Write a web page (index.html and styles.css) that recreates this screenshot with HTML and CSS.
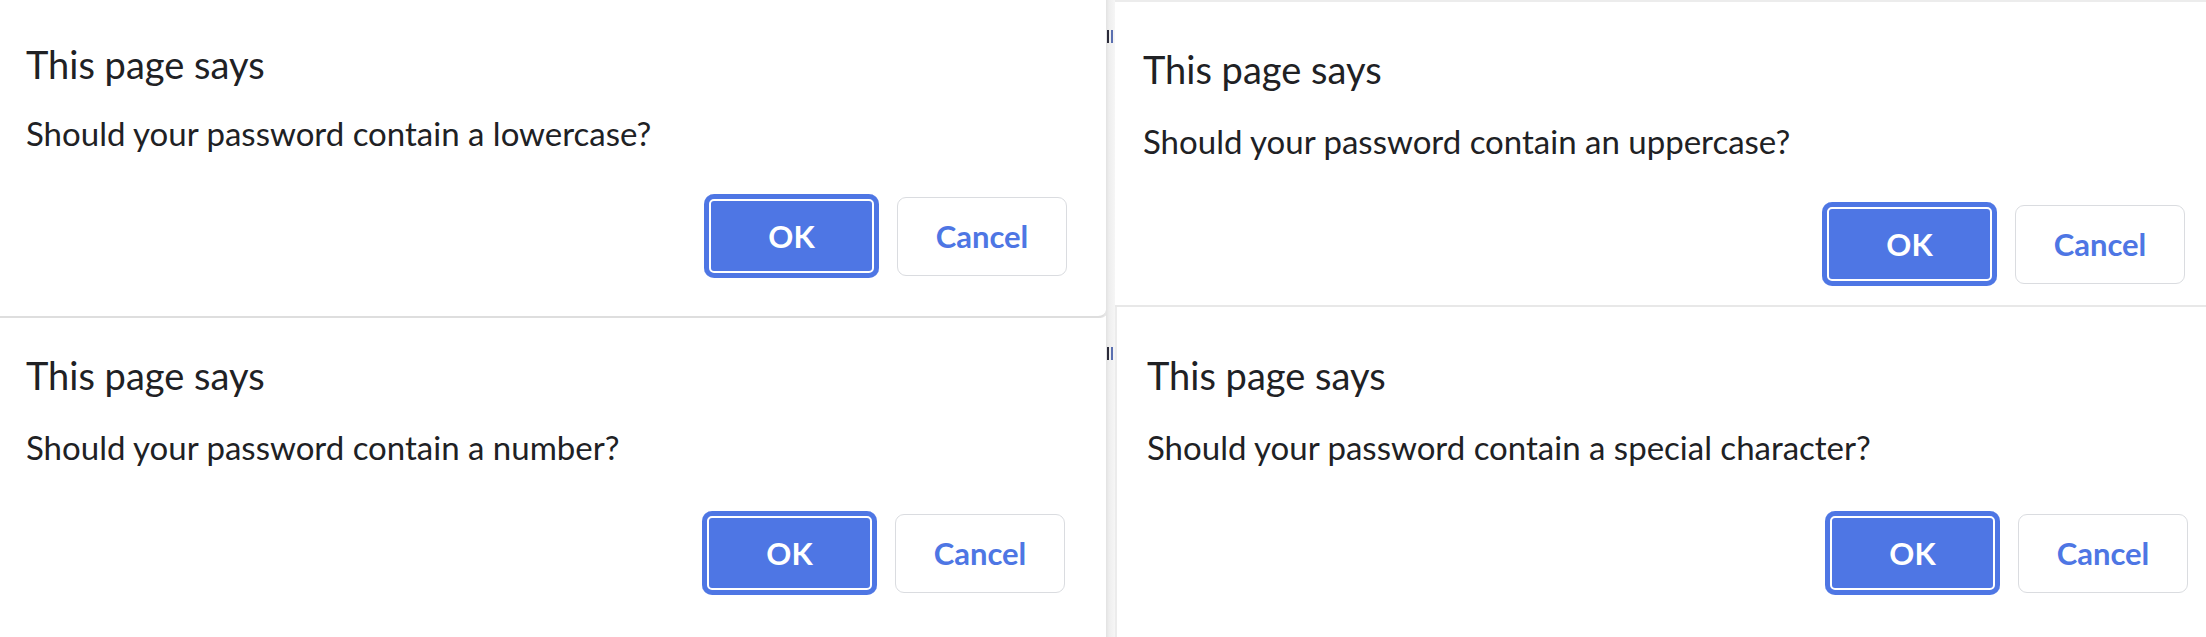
FILE: index.html
```html
<!DOCTYPE html>
<html lang="en">
<head>
<meta charset="utf-8">
<title>Password prompts</title>
<link rel="stylesheet" href="styles.css">
</head>
<body>
<div class="screen">
  <div class="col col-left">
    <section class="dialog d-tl">
      <h2 class="title">This page says</h2>
      <p class="msg">Should your password contain a lowercase?</p>
      <div class="actions">
        <button class="btn btn-ok">OK</button>
        <button class="btn btn-cancel">Cancel</button>
      </div>
    </section>
    <section class="dialog d-bl">
      <h2 class="title">This page says</h2>
      <p class="msg">Should your password contain a number?</p>
      <div class="actions">
        <button class="btn btn-ok">OK</button>
        <button class="btn btn-cancel">Cancel</button>
      </div>
    </section>
  </div>
  <div class="gap">
    <span class="frag frag-top"></span>
    <span class="frag frag-bottom"></span>
  </div>
  <div class="col col-right">
    <section class="dialog d-tr">
      <h2 class="title">This page says</h2>
      <p class="msg">Should your password contain an uppercase?</p>
      <div class="actions">
        <button class="btn btn-ok">OK</button>
        <button class="btn btn-cancel">Cancel</button>
      </div>
    </section>
    <section class="dialog d-br">
      <h2 class="title">This page says</h2>
      <p class="msg">Should your password contain a special character?</p>
      <div class="actions">
        <button class="btn btn-ok">OK</button>
        <button class="btn btn-cancel">Cancel</button>
      </div>
    </section>
  </div>
</div>
</body>
</html>
```
FILE: styles.css
```css
* { box-sizing: border-box; }
html, body {
  margin: 0;
  padding: 0;
  background: #ffffff;
  width: 2206px;
  height: 637px;
  overflow: hidden;
}
body {
  font-family: "Lato", "Noto Sans", sans-serif;
  color: #202124;
}
.screen {
  display: flex;
  width: 2206px;
  height: 637px;
}
.col {
  display: flex;
  flex-direction: column;
}
.col-left { width: 1106px; }
.col-right { width: 1091px; }

.gap {
  width: 9px;
  overflow: hidden;
  display: flex;
  flex-direction: column;
  background: linear-gradient(to right, #e2e2e2 0, #eeeeee 3px, #f6f6f6 9px);
}
/* clipped glyph remnants of the page behind the dialogs */
.frag {
  display: block;
  width: 6px;
  height: 13px;
  margin-left: 1px;
  border-left: 2px solid #2b2b3a;
  border-right: 2px solid #5a6fb0;
}
.frag-top { margin-top: 30px; }
.frag-bottom { margin-top: 304px; }

.dialog {
  background: #ffffff;
  display: flex;
  flex-direction: column;
}
.title {
  margin: 0;
  font-size: 38px;
  line-height: 45px;
  font-weight: 400;
  color: #202124;
}
.msg {
  margin: 0;
  font-size: 33px;
  line-height: 39px;
  color: #202124;
}
.actions {
  display: flex;
  justify-content: flex-end;
  align-items: center;
  gap: 18px;
}
.btn {
  font-family: "Lato", "Noto Sans", sans-serif;
  font-size: 31px;
  font-weight: 700;
  border-radius: 10px;
  cursor: pointer;
  padding: 0;
}
.btn-ok {
  width: 175px;
  height: 84px;
  border: none;
  color: #ffffff;
  background: #4e76e4;
  box-shadow: inset 0 0 0 5px #4e76e4, inset 0 0 0 7px #ffffff;
}
.btn-cancel {
  width: 170px;
  height: 79px;
  border: 1px solid #dadce0;
  color: #4e76e4;
  background: #ffffff;
  border-radius: 9px;
}

/* top-left shot */
.d-tl {
  height: 318px;
  padding: 42px 39px 0 26px;
  border-bottom: 2px solid #dedede;
  border-bottom-right-radius: 8px;
  box-shadow: 2px 0 0 #e6e6e6;
}
.d-tl .msg { margin-top: 27px; }
.d-tl .actions { margin-top: 41px; }

/* bottom-left shot */
.d-bl {
  flex: 1;
  padding: 35px 41px 0 26px;
  box-shadow: 1px 0 0 #e0e0e0;
}
.d-bl .msg { margin-top: 30px; }
.d-bl .actions { margin-top: 44px; }

/* top-right shot */
.d-tr {
  height: 307px;
  padding: 45px 21px 0 28px;
  border-top: 2px solid #ececec;
  border-bottom: 2px solid #e8e8e8;
}
.d-tr .msg { margin-top: 30px; }
.d-tr .actions { margin-top: 41px; }

/* bottom-right shot */
.d-br {
  flex: 1;
  padding: 46px 18px 0 32px;
  box-shadow: inset 2px 0 0 #ececec;
}
.d-br .msg { margin-top: 30px; }
.d-br .actions { margin-top: 44px; }
```
